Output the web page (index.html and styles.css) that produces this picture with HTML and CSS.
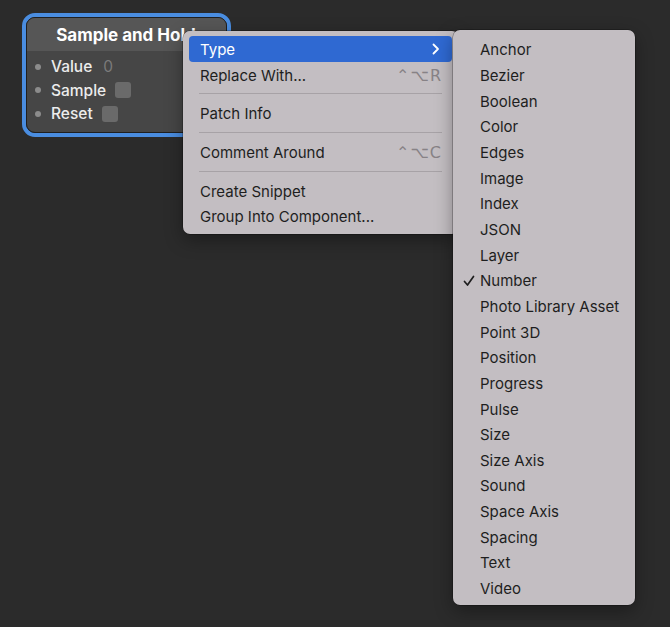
FILE: index.html
```html
<!DOCTYPE html>
<html>
<head>
<meta charset="utf-8">
<link rel="stylesheet" href="styles.css">
</head>
<body>
<div class="canvas">
  <div class="node">
    <div class="node-inner">
      <div class="node-header">Sample and Hold</div>
      <div class="node-body">
        <div class="port"><span class="dot"></span><span class="label">Value</span><span class="val">0</span></div>
        <div class="port"><span class="dot"></span><span class="label">Sample</span><span class="box"></span></div>
        <div class="port"><span class="dot"></span><span class="label">Reset</span><span class="box"></span></div>
      </div>
    </div>
  </div>

  <div class="menu main-menu">
    <div class="item active"><span class="text">Type</span>
      <svg class="chev" width="8" height="12" viewBox="0 0 8 12"><path d="M1.5 1.5 L6 6 L1.5 10.5" fill="none" stroke="#fff" stroke-width="1.8" stroke-linecap="round" stroke-linejoin="round"/></svg>
    </div>
    <div class="item"><span class="text">Replace With...</span><span class="sc">⌃⌥R</span></div>
    <div class="sep"></div>
    <div class="item"><span class="text">Patch Info</span></div>
    <div class="sep"></div>
    <div class="item"><span class="text">Comment Around</span><span class="sc">⌃⌥C</span></div>
    <div class="sep"></div>
    <div class="item"><span class="text">Create Snippet</span></div>
    <div class="item"><span class="text">Group Into Component...</span></div>
  </div>

  <div class="menu sub-menu">
    <div class="sitem">Anchor</div>
    <div class="sitem">Bezier</div>
    <div class="sitem">Boolean</div>
    <div class="sitem">Color</div>
    <div class="sitem">Edges</div>
    <div class="sitem">Image</div>
    <div class="sitem">Index</div>
    <div class="sitem">JSON</div>
    <div class="sitem">Layer</div>
    <div class="sitem checked"><svg class="check" width="12" height="12" viewBox="0 0 12 12"><path d="M1.5 6.5 L4.5 10 L10.5 1.5" fill="none" stroke="#1e1e1e" stroke-width="1.7" stroke-linecap="round" stroke-linejoin="round"/></svg>Number</div>
    <div class="sitem">Photo Library Asset</div>
    <div class="sitem">Point 3D</div>
    <div class="sitem">Position</div>
    <div class="sitem">Progress</div>
    <div class="sitem">Pulse</div>
    <div class="sitem">Size</div>
    <div class="sitem">Size Axis</div>
    <div class="sitem">Sound</div>
    <div class="sitem">Space Axis</div>
    <div class="sitem">Spacing</div>
    <div class="sitem">Text</div>
    <div class="sitem">Video</div>
  </div>
</div>
</body>
</html>
```

FILE: styles.css
```css
* { box-sizing: border-box; }
html, body {
  margin: 0;
  padding: 0;
  background: #2b2b2b;
  width: 670px;
  height: 627px;
  overflow: hidden;
  font-family: Inter, "Noto Sans", "DejaVu Sans", sans-serif;
}
.canvas {
  position: relative;
  width: 670px;
  height: 627px;
}

/* Node */
.node {
  position: absolute;
  left: 22px;
  top: 13px;
  width: 209px;
  height: 124px;
  border: 4.5px solid #4a8de0;
  border-radius: 13px;
}
.node-inner {
  height: 100%;
  border: 1px solid #1f1f1f;
  border-radius: 9px;
  background: #464646;
  overflow: hidden;
}
.node-header {
  height: 33px;
  background: #565656;
  color: #fff;
  font-weight: 700;
  font-size: 17px;
  display: flex;
  align-items: center;
  justify-content: center;
  padding-top: 1px;
  padding-right: 1px;
}
.node-body {
  padding-top: 4px;
  display: flex;
  flex-direction: column;
}
.port {
  height: 23.5px;
  display: flex;
  align-items: center;
  padding-left: 8px;
  color: #ececec;
  font-size: 15.5px;
  font-weight: 500;
}
.dot {
  width: 6px;
  height: 6px;
  border-radius: 50%;
  background: #8c8c8c;
  margin-right: 10px;
}
.label { margin-right: 10px; }
.val { color: #7b7b7b; font-weight: 400; margin-left: 1px; }
.box {
  width: 16px;
  height: 16px;
  border-radius: 3px;
  background: #6a6a6a;
  margin-left: -1px;
}

/* Menus */
.menu {
  position: absolute;
  background: #c3bec2;
  border-radius: 7px;
  box-shadow: 0 0 0 0.5px rgba(0,0,0,0.45), 0 6px 18px rgba(0,0,0,0.35);
  color: #1e1e1e;
  font-size: 15px;
}
.main-menu {
  left: 183px;
  top: 31px;
  width: 276px;
  height: 203px;
  padding: 5px 0 4px 6px;
}
.item {
  height: 25.7px;
  width: 263px;
  display: flex;
  align-items: center;
  justify-content: space-between;
  padding: 1px 11px 0 11px;
  border-radius: 4px;
}
.item.active {
  background: #2f69d2;
  color: #fff;
}
.sc {
  color: #878286;
  font-family: "DejaVu Sans", sans-serif;
  font-size: 16px;
  letter-spacing: 1px;
  margin-right: -1px;
}
.sep {
  height: 13px;
  display: flex;
  align-items: center;
  padding: 0 10px;
  width: 263px;
}
.sep::before {
  content: "";
  flex: 1;
  height: 1px;
  background: #a7a2a6;
}
.chev { margin-right: 1px; }

.sub-menu {
  left: 453px;
  top: 30px;
  width: 182px;
  height: 575px;
  padding-top: 7px;
  display: flex;
  flex-direction: column;
}
.sitem {
  height: 25.67px;
  display: flex;
  align-items: center;
  padding-left: 27px;
  position: relative;
}
.check {
  position: absolute;
  left: 10px;
  top: 7px;
}
```
